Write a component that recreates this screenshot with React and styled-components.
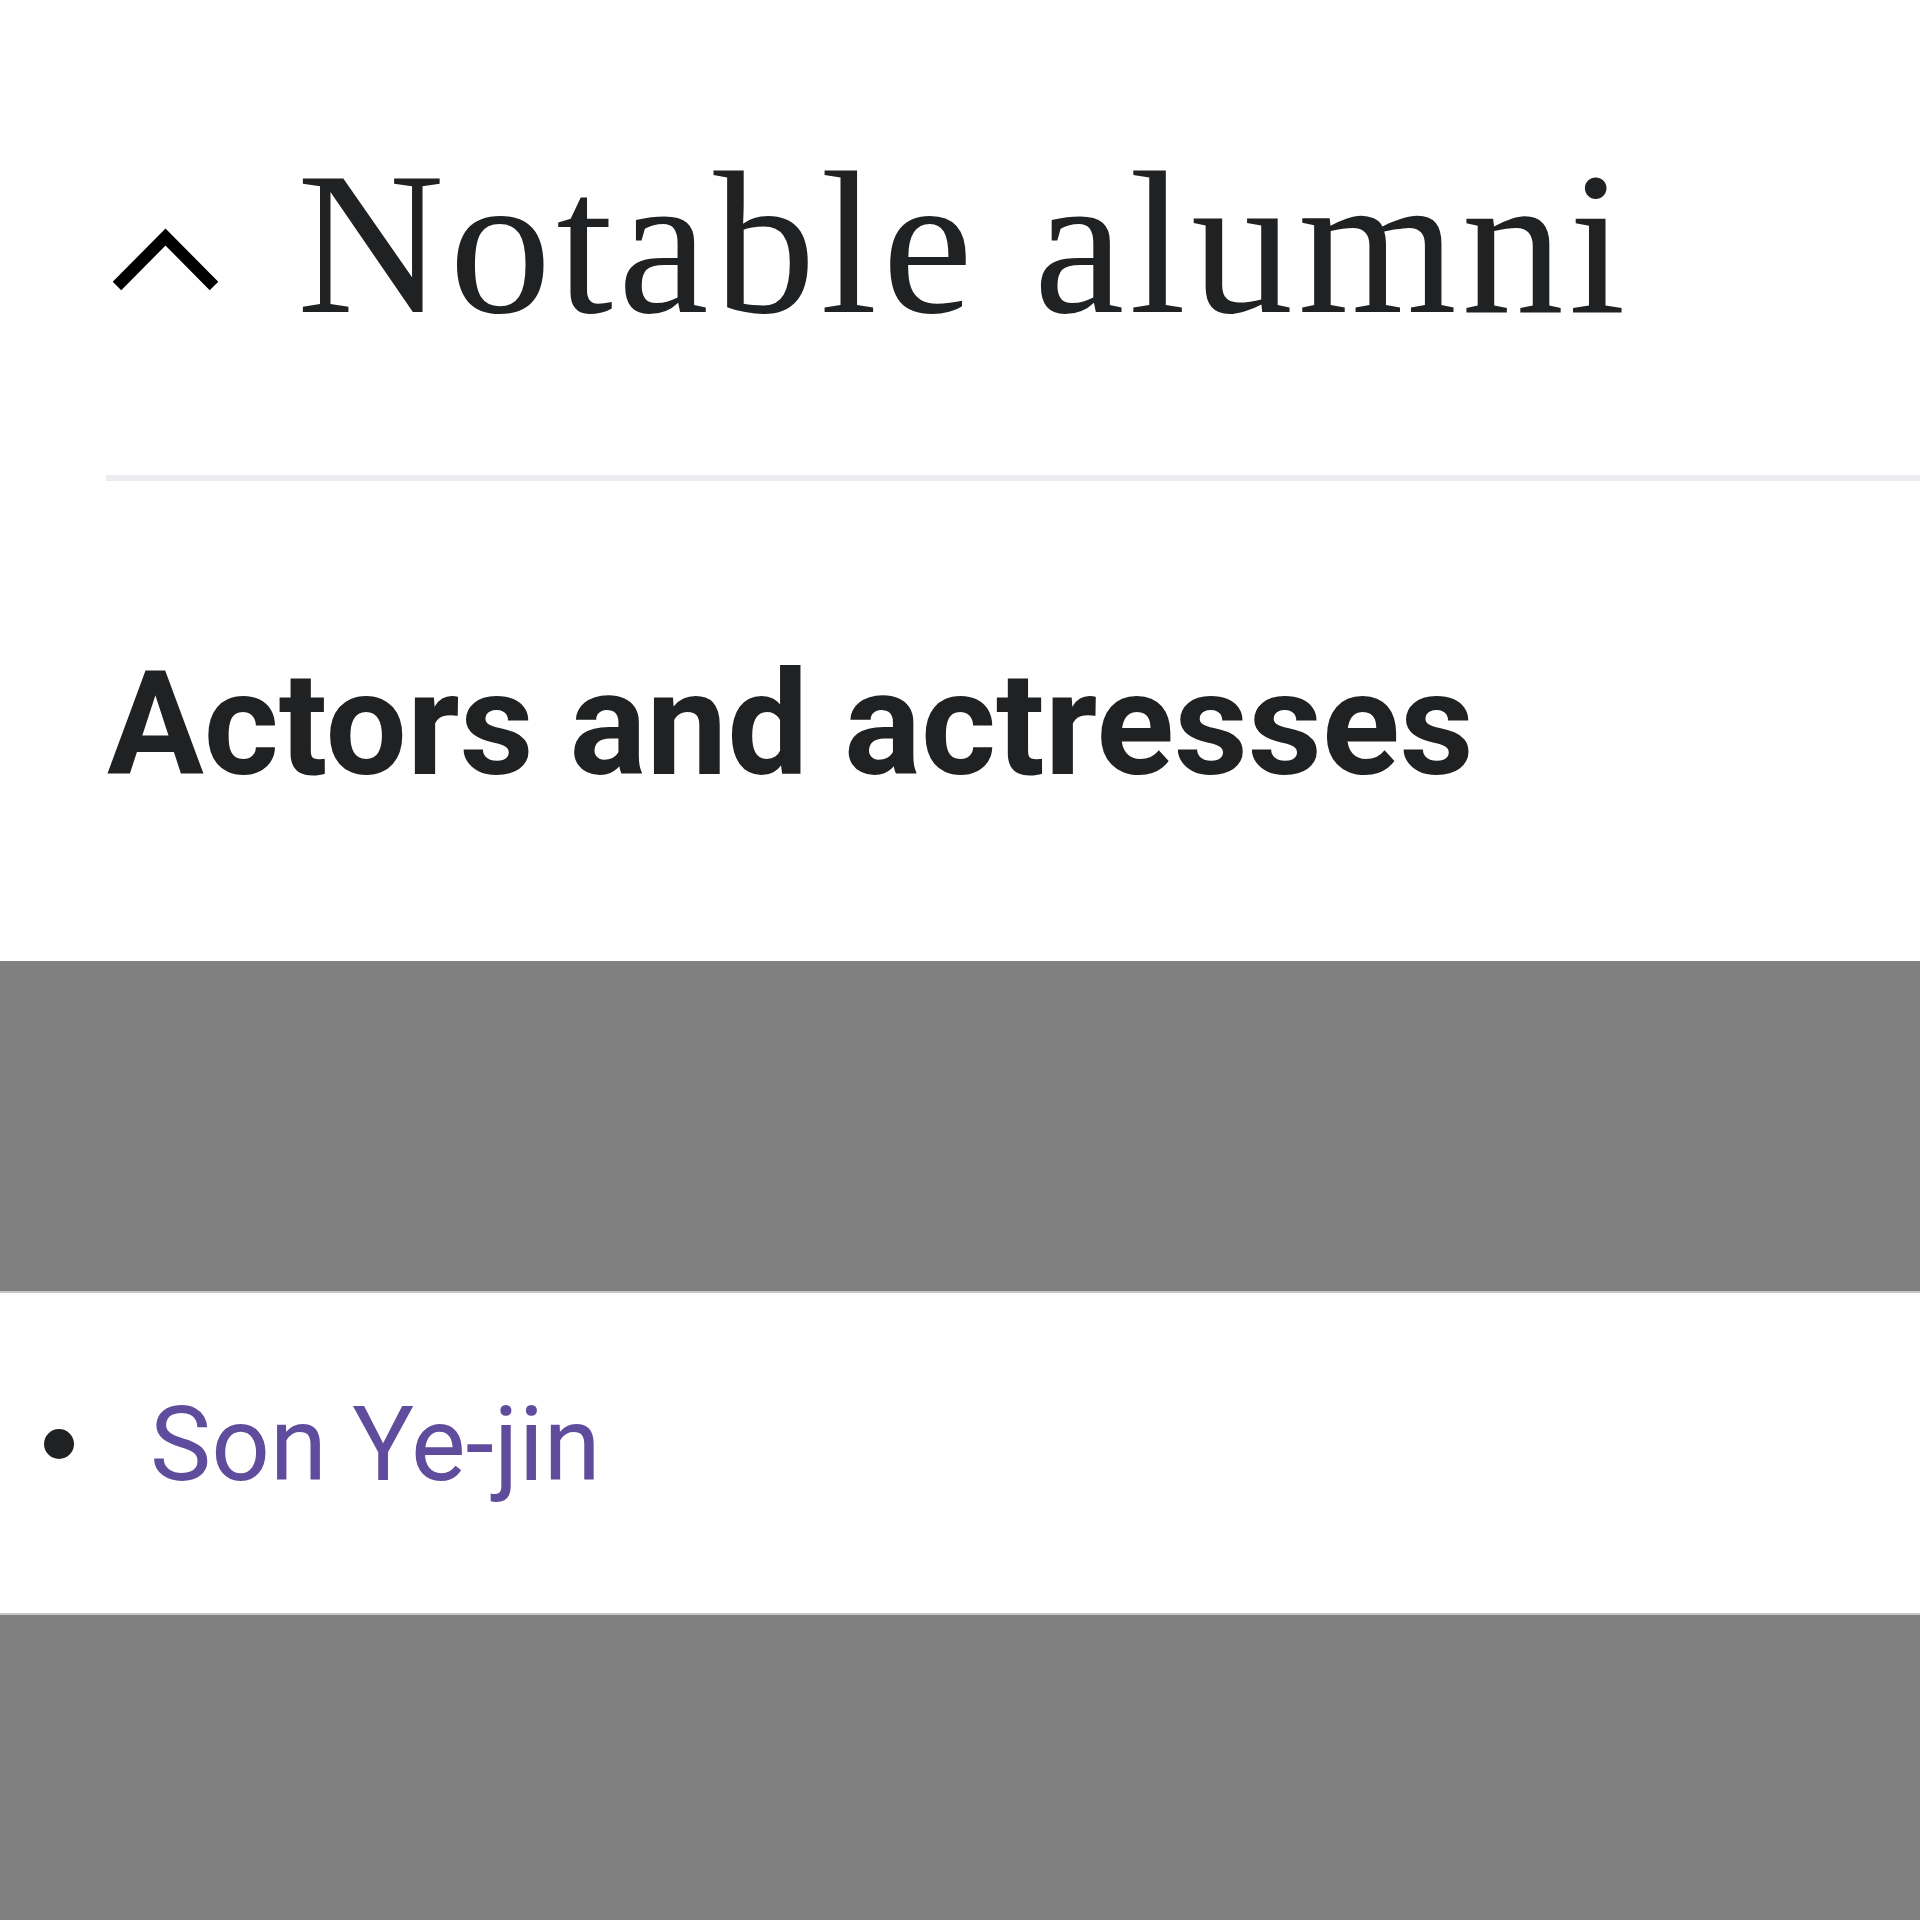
import styled, { createGlobalStyle } from 'styled-components';

const GlobalStyle = createGlobalStyle`
  html, body {
    margin: 0;
    padding: 0;
    background: #ffffff;
  }
`;

const Page = styled.div`
  display: flex;
  flex-direction: column;
  width: 1920px;
  height: 1920px;
  background: #ffffff;
  overflow: hidden;
`;

const SectionHeader = styled.div`
  display: flex;
  align-items: flex-start;
  padding: 141px 0 0 107px;
`;

const Chevron = styled.svg`
  flex: none;
  margin-top: 83px;
`;

const Title = styled.h2`
  margin: 0 0 0 72px;
  font-family: "Liberation Serif", "DejaVu Serif", serif;
  font-weight: 400;
  font-size: 204px;
  line-height: 204px;
  letter-spacing: 5px;
  color: #202122;
  white-space: nowrap;
`;

const Divider = styled.div`
  margin: 130px 0 0 106px;
  height: 6px;
  background: #eaecf0;
`;

const SubHeading = styled.h3`
  margin: 171px 0 0 107px;
  font-family: Roboto, "Liberation Sans", sans-serif;
  font-weight: 700;
  font-size: 144px;
  line-height: 145px;
  color: #202122;
  white-space: nowrap;
`;

const Shade = styled.div`
  flex: ${p => (p.$fill ? '1' : 'none')};
  height: ${p => (p.$fill ? 'auto' : `${p.$h}px`)};
  margin-top: ${p => p.$mt || 0}px;
  background: #808080;
  border-top: ${p => (p.$edge === 'top' ? '2px solid #c6c6c6' : 'none')};
  border-bottom: ${p => (p.$edge === 'bottom' ? '2px solid #c6c6c6' : 'none')};
`;

const List = styled.ul`
  list-style: none;
  margin: 0;
  padding: 100px 0 0 0;
  height: 220px;
`;

const Item = styled.li`
  display: flex;
  align-items: flex-start;
`;

const Bullet = styled.span`
  flex: none;
  width: 30px;
  height: 30px;
  margin: 36px 0 0 44px;
  border-radius: 50%;
  background: #202122;
`;

const Link = styled.a`
  margin-left: 76px;
  font-family: Roboto, "Liberation Sans", sans-serif;
  font-weight: 400;
  font-size: 103px;
  line-height: 103px;
  color: #604c9c;
  text-decoration: none;
  white-space: nowrap;
`;

const App = () => (
  <Page>
    <GlobalStyle />
    <SectionHeader>
      <Chevron width="118" height="72" viewBox="0 0 118 72">
        <polyline points="10,62 58.5,13 107,62" fill="none" stroke="#000" strokeWidth="12" strokeLinejoin="miter" />
      </Chevron>
      <Title>Notable alumni</Title>
    </SectionHeader>
    <Divider />
    <SubHeading>Actors and actresses</SubHeading>
    <Shade $mt={164} $h={330} $edge="bottom" />
    <List>
      <Item>
        <Bullet />
        <Link href="#">Son Ye-jin</Link>
      </Item>
    </List>
    <Shade $fill $edge="top" />
  </Page>
);

export default App;
